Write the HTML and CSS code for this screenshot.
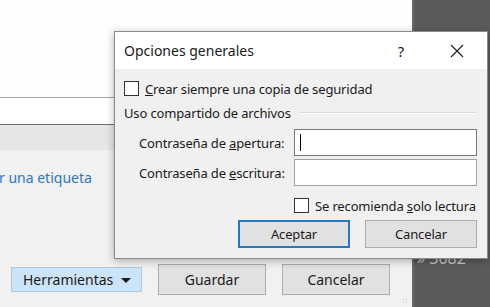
FILE: index.html
```html
<!DOCTYPE html>
<html lang="es">
<head>
  <meta charset="UTF-8" />
  <meta name="viewport" content="width=device-width, initial-scale=1" />
  <title>Opciones generales</title>
  <link rel="stylesheet" href="styles.css">
</head>
<body>

  <div class="page">
    <div class="main">
      <div class="top"></div>
      <div class="field"></div>
      <div class="band"></div>
      <div class="content">
        <a class="tag-link">r una etiqueta</a>
        <div class="actions">
          <button class="tools-btn">Herramientas <span class="caret-down"></span></button>
          <button class="page-btn">Guardar</button>
          <button class="page-btn">Cancelar</button>
        </div>
        <div class="grip"></div>
      </div>
    </div>
    <div class="side">
      <span class="side-num">» 3082</span>
    </div>
  </div>

  <div class="dialog">
    <div class="dialog-title">
      <span class="title-text">Opciones generales</span>
      <span class="help">?</span>
      <span class="close">
        <svg width="14" height="14" viewBox="0 0 14 14">
          <path d="M1 1 L13 13 M13 1 L1 13" stroke="#1a1a1a" stroke-width="1.1" fill="none" />
        </svg>
      </span>
    </div>

    <div class="dialog-body">
      <label class="check-row">
        <span class="box"></span>
        <span><u>C</u>rear siempre una copia de seguridad</span>
      </label>

      <div class="group-title">
        <span>Uso compartido de archivos</span>
        <span class="rule"></span>
      </div>

      <div class="pw-row">
        <span class="pw-label">Contraseña de <u>a</u>pertura:</span>
        <div class="pw-input"><span class="text-caret"></span></div>
      </div>
      <div class="pw-row second">
        <span class="pw-label">Contraseña de <u>e</u>scritura:</span>
        <div class="pw-input"></div>
      </div>

      <label class="check-row readonly">
        <span class="box"></span>
        <span>Se recomienda <u>s</u>olo lectura</span>
      </label>

      <div class="dialog-buttons">
        <button class="dlg-btn default">Aceptar</button>
        <button class="dlg-btn">Cancelar</button>
      </div>
    </div>
  </div>

</body>
</html>
```

FILE: styles.css
```css
body {
  font-family: 'Noto Sans', 'Open Sans', sans-serif;
  margin: 0;
  padding: 0;
  width: 490px;
  height: 307px;
  overflow: hidden;
  position: relative;
  color: #1a1a1a;
}

.page {
  display: flex;
  height: 307px;
}

.main {
  width: 412px;
  display: flex;
  flex-direction: column;
  background: #f0f0f0;
}

.top {
  height: 97px;
  background: #fdfdfd;
}

.field {
  height: 26px;
  background: #fff;
  border-top: 1px solid #a7a7a7;
  border-bottom: 1px solid #6f6f6f;
}

.band {
  height: 25px;
  background: #e6e6e6;
}

.content {
  flex: 1;
  position: relative;
  background: #f1f1f1;
}

.tag-link {
  display: block;
  margin: 18px 0 0 -1px;
  font-size: 14px;
  color: #2a78c0;
  line-height: 20px;
}

.actions {
  display: flex;
  align-items: center;
  gap: 16px;
  margin: 76px 0 0 11px;
}

.actions button {
  font-family: inherit;
  font-size: 14px;
  color: #1a1a1a;
  cursor: pointer;
}

.tools-btn {
  width: 131px;
  height: 25px;
  padding: 0 0 0 11px;
  text-align: left;
  background: #cce4f7;
  border: 1px solid #a9cbe6;
  position: relative;
}

.caret-down {
  position: absolute;
  right: 10px;
  top: 10px;
  border-left: 5px solid transparent;
  border-right: 5px solid transparent;
  border-top: 5px solid #1a1a1a;
}

.page-btn {
  width: 108px;
  height: 31px;
  background: #e1e1e1;
  border: 1px solid #adadad;
}

.grip {
  position: absolute;
  right: 4px;
  bottom: 3px;
  width: 6px;
  height: 6px;
  background: radial-gradient(circle, #c4c4c4 1px, transparent 1px) 0 0 / 3px 3px;
}

.side {
  flex: 1;
  background: #5b5b5b;
  border-left: 2px solid #686868;
  position: relative;
}

.side-num {
  position: absolute;
  left: 3px;
  top: 247px;
  font-size: 16px;
  color: #c9c9c9;
}

/* dialog */

.dialog {
  position: absolute;
  left: 114px;
  top: 31px;
  width: 372px;
  height: 226px;
  background: #f0f0f0;
  border: 1px solid #8a8a8a;
  box-shadow: 0 2px 8px rgba(0,0,0,0.3);
  font-size: 13px;
  letter-spacing: -0.15px;
  white-space: nowrap;
}

.dialog-title {
  height: 37px;
  background: #fff;
  display: flex;
  align-items: center;
  padding-left: 9px;
}

.title-text {
  font-size: 14px;
  letter-spacing: 0;
  flex: 1;
}

.help {
  font-size: 15px;
  width: 20px;
  text-align: center;
  margin-right: 39px;
}

.close {
  display: flex;
  align-items: center;
  justify-content: center;
  width: 14px;
  margin-right: 23px;
}

.dialog-body {
  padding: 11px 10px 0 9px;
}

.check-row {
  display: flex;
  align-items: center;
  gap: 6px;
  height: 17px;
}

.box {
  width: 13px;
  height: 13px;
  flex: none;
  border: 1px solid #333;
  background: #fff;
}

.group-title {
  display: flex;
  align-items: center;
  height: 18px;
  margin-top: 7px;
}

.rule {
  flex: 1;
  margin-left: 8px;
  border-top: 1px solid #d9d9d9;
  border-bottom: 1px solid #fff;
}

.pw-row {
  display: flex;
  align-items: center;
  margin-top: 7px;
}

.pw-row.second {
  margin-top: 3px;
}

.pw-label {
  width: 155px;
  padding-left: 15px;
}

.pw-input {
  width: 181px;
  height: 25px;
  background: #fff;
  border: 1px solid #7a7a7a;
  position: relative;
}

.pw-row.second .pw-input {
  border-color: #a0a0a0;
}

.text-caret {
  position: absolute;
  left: 5px;
  top: 4px;
  width: 1px;
  height: 17px;
  background: #000;
}

.check-row.readonly {
  margin: 12px 0 0 170px;
  height: 15px;
}

.dialog-buttons {
  display: flex;
  justify-content: flex-end;
  gap: 15px;
  margin-top: 7px;
}

.dlg-btn {
  width: 112px;
  height: 28px;
  font-family: inherit;
  font-size: 13px;
  letter-spacing: -0.15px;
  color: #1a1a1a;
  background: #e1e1e1;
  border: 1px solid #adadad;
}

.dlg-btn.default {
  border: 2px solid #2478c4;
}
```
